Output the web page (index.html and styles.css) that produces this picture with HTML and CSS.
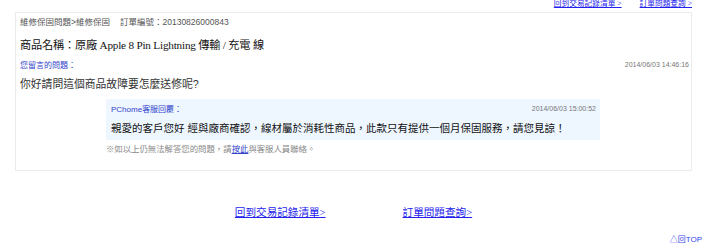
FILE: index.html
```html
<!DOCTYPE html>
<html lang="zh-Hant">
<head>
  <meta charset="UTF-8" />
  <meta name="viewport" content="width=device-width, initial-scale=1.0" />
  <title>維修保固問題</title>
  <link rel="stylesheet" href="styles.css">
</head>
<body>
  <div class="top-nav">
    <a href="#" class="nav-link">回到交易記錄清單 &gt;</a>
    <a href="#" class="nav-link">訂單問題查詢 &gt;</a>
  </div>

  <div class="box">
    <div class="crumb">維修保固問題&gt;維修保固<span class="order-no">訂單編號：20130826000843</span></div>
    <h1 class="title">商品名稱：原廠 Apple 8 Pin Lightning 傳輸 / 充電 線</h1>

    <div class="row-head">
      <span class="label">您留言的問題：</span>
      <span class="stamp">2014/06/03 14:46:16</span>
    </div>
    <p class="question">你好請問這個商品故障要怎麼送修呢?</p>

    <div class="reply">
      <div class="row-head reply-head">
        <span class="label">PChome客服回覆：</span>
        <span class="stamp">2014/06/03 15:00:52</span>
      </div>
      <p class="reply-text">親愛的客戶您好 經與廠商確認，線材屬於消耗性商品，此款只有提供一個月保固服務，請您見諒！</p>
    </div>
    <p class="note">※如以上仍無法解答您的問題，請<a href="#">按此</a>與客服人員聯絡。</p>
  </div>

  <div class="bottom-nav">
    <a href="#" class="nav-link">回到交易記錄清單&gt;</a>
    <a href="#" class="nav-link">訂單問題查詢&gt;</a>
  </div>
  <div class="to-top"><a href="#">△回TOP</a></div>
</body>
</html>
```

FILE: styles.css
```css
* {
  margin: 0;
  padding: 0;
  box-sizing: border-box;
}

body {
  margin: 0;
  background: #fff;
  font-family: "Liberation Sans", "Noto Sans CJK TC", sans-serif;
  color: #333;
}

.nav-link {
  font-family: "Liberation Serif", "Noto Sans CJK TC", serif;
  color: #2222ee;
  text-decoration: underline;
}

.top-nav {
  display: flex;
  justify-content: flex-end;
  gap: 18px;
  height: 12px;
  padding-right: 28px;
}

.top-nav .nav-link {
  font-size: 7.7px;
  line-height: 8px;
}

.box {
  margin-left: 15px;
  width: 677px;
  border: 1px solid #ebebeb;
  padding: 0 2px 11px 4px;
}

.crumb {
  font-size: 8.5px;
  line-height: 18px;
  color: #555;
}

.order-no {
  margin-left: 10px;
}

.title {
  font-family: "Liberation Serif", "Noto Sans CJK TC", serif;
  font-size: 11.2px;
  letter-spacing: -0.2px;
  font-weight: normal;
  line-height: 28px;
  color: #111;
}

.row-head {
  display: flex;
  justify-content: space-between;
  align-items: center;
  height: 10px;
}

.label {
  font-size: 8px;
  color: #3344cc;
}

.stamp {
  font-size: 7px;
  color: #777;
  padding-top: 1px;
}

.question {
  font-size: 10.8px;
  line-height: 30px;
  color: #333;
}

.reply {
  margin-left: 86px;
  width: 494px;
  background: #eef6ff;
  padding: 0 4px 0 5px;
}

.reply-head {
  height: 18px;
}

.reply-text {
  font-size: 10.5px;
  line-height: 23px;
  color: #111;
}

.note {
  margin-left: 86px;
  font-size: 8.4px;
  line-height: 19px;
  color: #888;
}

.note a {
  color: #3344cc;
  text-decoration: underline;
}

.bottom-nav {
  display: flex;
  justify-content: center;
  gap: 77px;
  margin-top: 35px;
  padding-right: 13px;
}

.bottom-nav .nav-link {
  font-size: 10.6px;
  line-height: 14px;
}

.to-top {
  display: flex;
  justify-content: flex-end;
  margin-top: 15px;
  padding-right: 18px;
  line-height: 10px;
}

.to-top a {
  font-size: 8px;
  color: #3344ee;
  text-decoration: none;
}
```
